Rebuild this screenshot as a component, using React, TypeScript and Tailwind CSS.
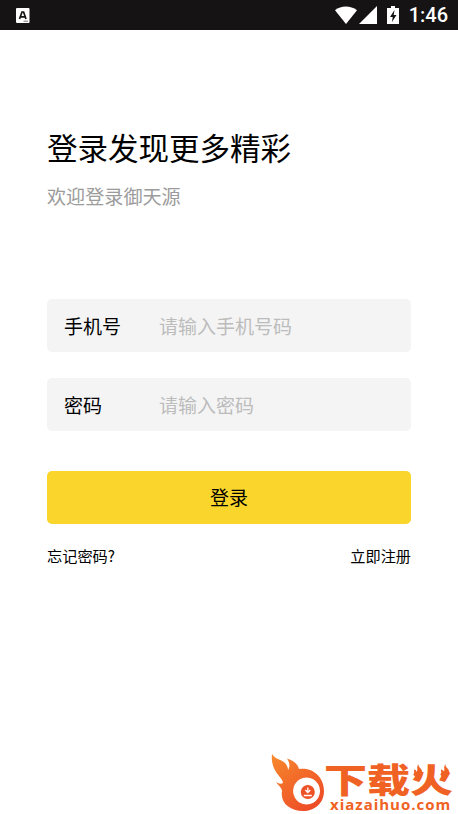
import { useState } from 'react';

const FONT = "font-['Noto_Sans_CJK_SC',sans-serif]";

function StatusBar() {
  return (
    <header className="flex h-[30px] shrink-0 items-center justify-between bg-[#161314] pl-4 pr-[10px]">
      <svg width="14" height="15" viewBox="0 0 14 15">
        <rect width="13.5" height="15" rx="1" fill="#fff" />
        <path d="M3.5 11 6 4h1.6L10 11M4.6 8.8h4.4" stroke="#161314" strokeWidth="1.7" fill="none" />
        <path d="M7.5 13.2h4.5" stroke="#777" strokeWidth="1" />
      </svg>
      <div className="flex items-center text-white">
        <svg width="68" height="20" viewBox="0 0 68 20" fill="currentColor">
          <path d="M0 5.2C6 .2 15.500 .2 22 5.200L11 19Z" />
          <path d="M42 1v18H24Z" />
          <path fillRule="evenodd" d="M56 1h4v2h4v16H52V3h4ZM59.500 5 55 12h2.700L57 17l4.500-7h-2.800Z" />
        </svg>
        <span className="ml-[6px] font-['Roboto',sans-serif] text-[20px] font-medium leading-[30px]">1:46</span>
      </div>
    </header>
  );
}

interface FieldProps {
  label: string;
  placeholder: string;
  type: string;
}

function Field({ label, placeholder, type }: FieldProps) {
  const [value, setValue] = useState('');

  return (
    <label className="flex h-[53px] items-center rounded-[5px] bg-[#f4f4f4] pl-[17px] pt-px text-[19px]">
      <span className="w-[95px] shrink-0 text-black">{label}</span>
      <input
        type={type}
        value={value}
        onChange={(e) => setValue(e.target.value)}
        placeholder={placeholder}
        className="min-w-0 flex-1 bg-transparent outline-none placeholder:text-[#bcbcbc]"
      />
    </label>
  );
}

function SiteLogo() {
  return (
    <div className="absolute bottom-0 right-0 flex h-[64px] w-[190px] text-[#f06223]">
      <svg className="shrink-0" width="56" height="64" viewBox="0 0 56 64">
        <defs>
          <linearGradient id="flame" x1="0" y1="0" x2="0.7" y2="1">
            <stop offset="0" stopColor="#f78a2c" />
            <stop offset="1" stopColor="#ee4d27" />
          </linearGradient>
        </defs>
        <path
          fill="url(#flame)"
          fillRule="evenodd"
          d="M4 4C8 10 13 9 17 13C19 15 20 18 20 20C22 17 22 13 19 8.500C27 11 30 15 31 19C46 17 56 28 56 41C56 53 47 61 35 61C22 61 12 53 14 41C14 38 11 36 8 32C11 34 13 34 15 33C15 27 2 22 4 4ZM38.500 27.500a13.500 13.500 0 1 0 .1 0Z"
        />
        <circle cx="39.800" cy="42" r="7" fill="#ee5126" />
        <path d="M39.800 37.500v4M37.300 40l2.500 2.500 2.500-2.500M35.800 45.500h8" stroke="#fff" strokeWidth="1.300" fill="none" />
      </svg>
      <div className="flex flex-col">
        <div className="relative h-[44px] w-[134px]">
          <div className="origin-top-left scale-y-[0.78] whitespace-nowrap pt-[15px] text-[43px] font-black leading-[43px]">
            下载火
          </div>
          <svg className="absolute right-[5px] top-[14px]" width="42" height="18" viewBox="0 0 42 20" fill="currentColor">
            <path d="M6 0c-1 4 5 5 4 10-1 5-8 6-10 1 2 0 1-3 1-5 2 0 3 2 3 3 2-3-1-5 2-9Z" />
            <path d="M36 0c-1 4 5 5 4 10-1 5-8 6-10 1 2 0 1-3 1-5 2 0 3 2 3 3 2-3-1-5 2-9Z" />
          </svg>
        </div>
        <div className="pl-[6px] font-['Open_Sans',sans-serif] text-[15px] font-bold leading-[20px] tracking-[1px]">
          xiazaihuo.com
        </div>
      </div>
    </div>
  );
}

export default function App() {
  return (
    <div className={`relative flex h-[814px] w-[458px] flex-col overflow-hidden bg-white ${FONT}`}>
      <StatusBar />

      <main className="flex flex-col px-[47px] pt-[95px]">
        <h1 className="text-[30.5px] leading-[44px] text-black">登录发现更多精彩</h1>
        <p className="mt-[13px] text-[19.1px] leading-[28px] text-[#9b9b9b]">欢迎登录御天源</p>

        <form className="mt-[89px] flex flex-col" onSubmit={(e) => e.preventDefault()}>
          <div className="flex flex-col gap-[26px]">
            <Field label="手机号" placeholder="请输入手机号码" type="tel" />
            <Field label="密码" placeholder="请输入密码" type="password" />
          </div>
          <button type="submit" className="mt-10 h-[53px] rounded-[5px] bg-[#fad62d] text-[19px] text-black">
            登录
          </button>
        </form>

        <div className="mt-[19px] flex justify-between text-[15.2px] leading-6 text-black">
          <a href="#forgot">忘记密码?</a>
          <a href="#register">立即注册</a>
        </div>
      </main>

      <SiteLogo />
    </div>
  );
}
